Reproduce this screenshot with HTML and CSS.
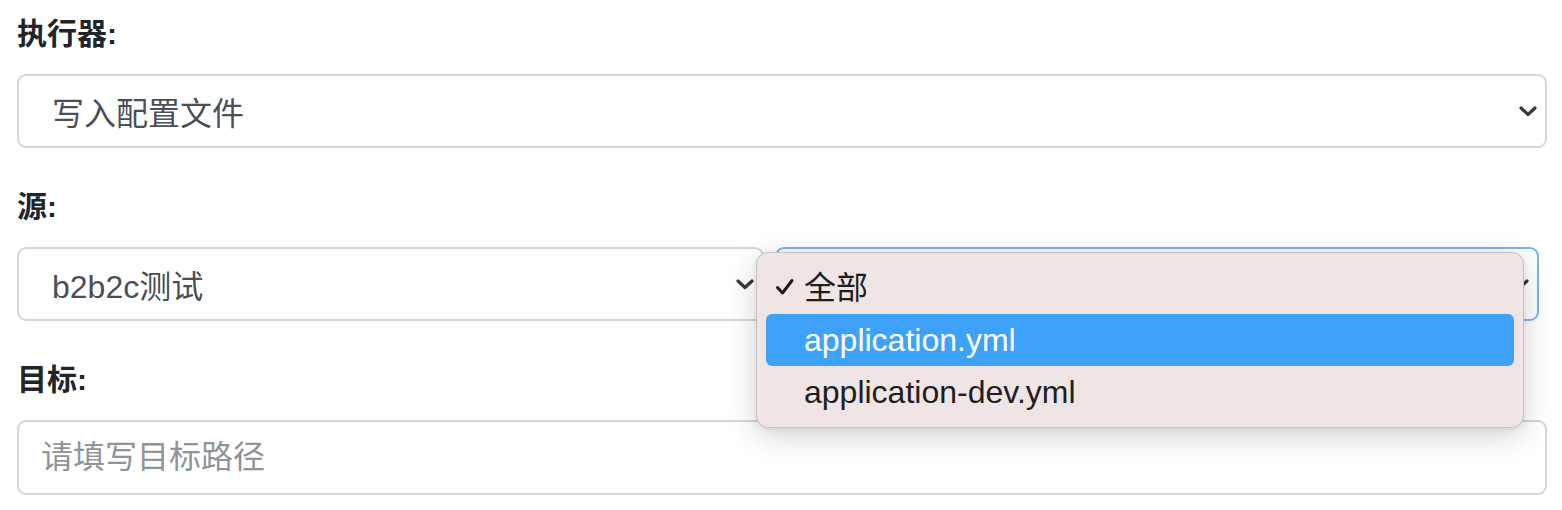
FILE: index.html
```html
<!DOCTYPE html>
<html lang="zh">
<head>
<meta charset="utf-8">
<link rel="stylesheet" href="styles.css">
</head>
<body>
<div class="form">
  <div class="group">
    <div class="label">执行器:</div>
    <div class="select full">
      <span class="value">写入配置文件</span>
      <svg class="chev" width="18" height="11" viewBox="0 0 18 11"><polyline points="2,2 9,8.5 16,2" fill="none" stroke="#343a40" stroke-width="3.2" stroke-linecap="round" stroke-linejoin="round"/></svg>
    </div>
  </div>
  <div class="group">
    <div class="label">源:</div>
    <div class="pair">
      <div class="select">
        <span class="value">b2b2c测试</span>
        <svg class="chev" width="18" height="11" viewBox="0 0 18 11"><polyline points="2,2 9,8.5 16,2" fill="none" stroke="#343a40" stroke-width="3.2" stroke-linecap="round" stroke-linejoin="round"/></svg>
      </div>
      <div class="select focus">
        <span class="value"></span>
        <svg class="chev" width="18" height="11" viewBox="0 0 18 11"><polyline points="2,2 9,8.5 16,2" fill="none" stroke="#343a40" stroke-width="3.2" stroke-linecap="round" stroke-linejoin="round"/></svg>
        <div class="menu">
          <div class="item first"><svg class="check" width="20" height="18" viewBox="0 0 20 18"><polyline points="2.5,9.5 7.5,15 17,2.5" fill="none" stroke="#1a1a1a" stroke-width="3" stroke-linecap="round" stroke-linejoin="round"/></svg><span>全部</span></div>
          <div class="item active"><span>application.yml</span></div>
          <div class="item"><span>application-dev.yml</span></div>
        </div>
      </div>
    </div>
  </div>
  <div class="group">
    <div class="label">目标:</div>
    <input class="input" type="text" placeholder="请填写目标路径">
  </div>
</div>
</body>
</html>
```

FILE: styles.css
```css
* { box-sizing: border-box; }
html, body { margin: 0; padding: 0; background: #fff; }
body {
  font-family: "Liberation Sans", "Noto Sans CJK SC", sans-serif;
  color: #212529;
}
.form { padding: 14px 15px 0 17px; width: 1562px; }
.group { margin-bottom: 39px; }
.label {
  font-size: 30px;
  line-height: 40px;
  font-weight: bold;
  color: #212529;
  margin-bottom: 20px;
}
.select {
  position: relative;
  height: 74px;
  border: 2px solid #d3d6da;
  border-radius: 9px;
  background: #fff;
  display: flex;
  align-items: center;
  padding: 0 8px 0 33px;
}
.select .value {
  flex: 1;
  font-size: 32px;
  color: #495057;
  white-space: nowrap;
}
.chev { flex: none; }
.pair {
  display: grid;
  grid-template-columns: 747px 764px;
  column-gap: 11px;
}
.select.focus { border-color: #7ab4ee; }
.menu {
  position: absolute;
  left: -21px;
  top: 3px;
  width: 768px;
  height: 176px;
  background: #efe5e4;
  border: 1px solid #c9c2c1;
  border-radius: 12px;
  box-shadow: 0 8px 30px rgba(0,0,0,0.18), 0 1px 4px rgba(0,0,0,0.08);
  padding: 9px 9px;
  display: flex;
  flex-direction: column;
}
.item {
  height: 52px;
  display: flex;
  align-items: center;
  padding-left: 38px;
  position: relative;
  font-size: 32px;
  color: #1e1e1e;
  border-radius: 6px;
}
.item.first span { position: relative; top: -3px; }
.item .check { position: absolute; left: 9px; top: 16px; }
.item.active { background: #3fa2fa; color: #fff; }
.input {
  display: block;
  width: 100%;
  height: 75px;
  border: 2px solid #d3d6da;
  border-radius: 9px;
  padding: 0 22px;
  font-family: "Liberation Sans", "Noto Sans CJK SC", sans-serif;
  font-size: 32px;
  color: #495057;
  outline: none;
  background: #fff;
}
.input::placeholder { color: #8e949a; }
```
